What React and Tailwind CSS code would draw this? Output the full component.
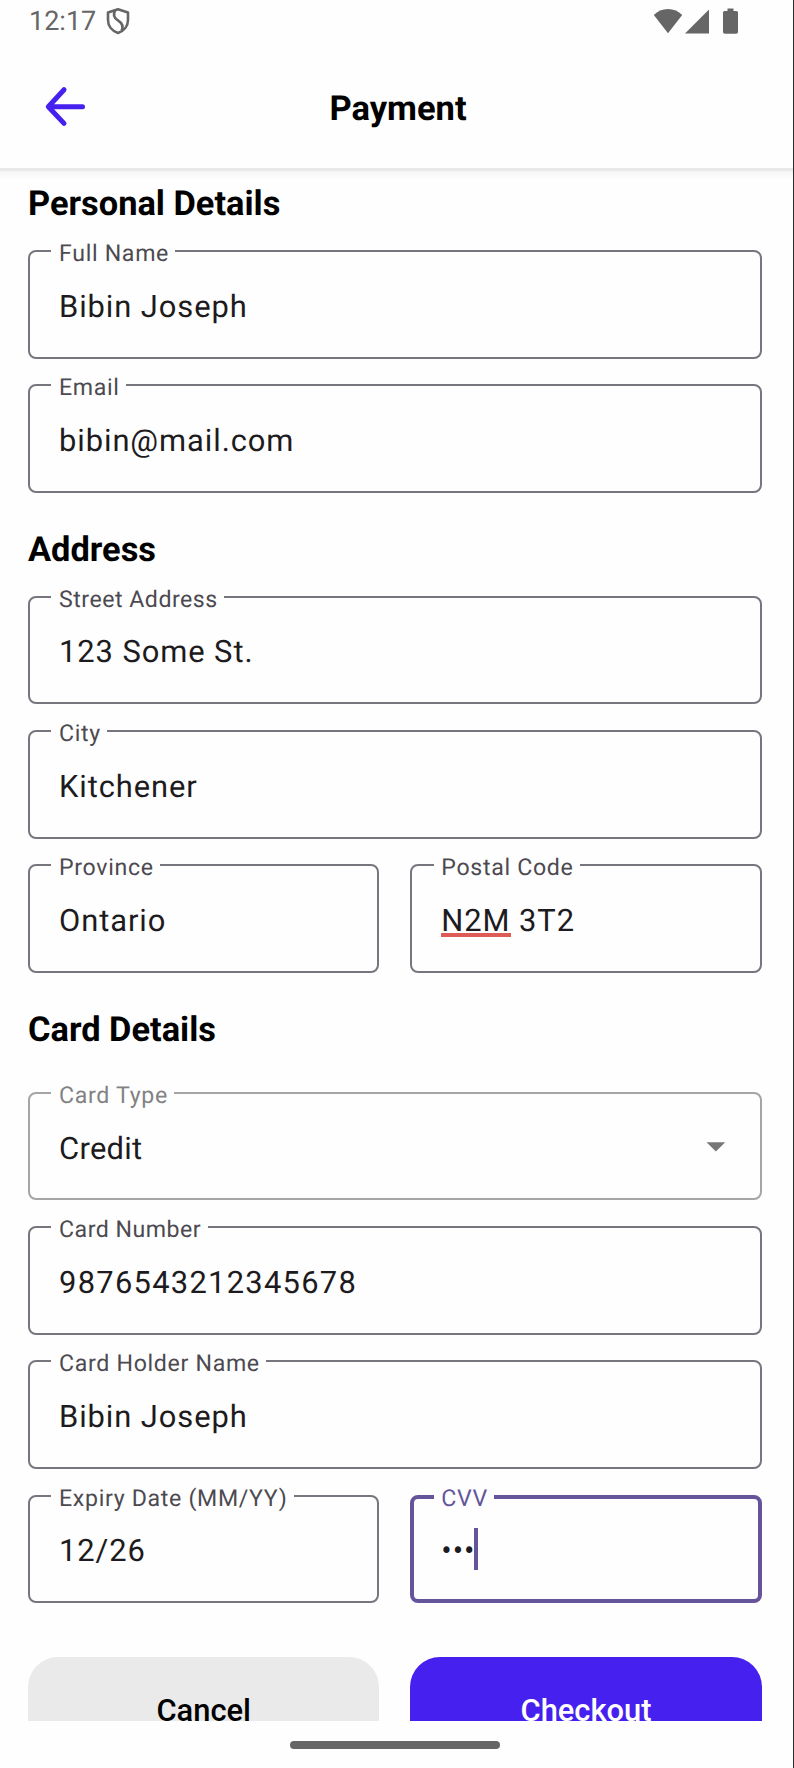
import React from "react";

function Heading({ children, className = "" }) {
  return (
    <h2 className={`h-10 pt-px text-[34.4px] leading-10 font-bold text-black whitespace-nowrap ${className}`}>
      {children}
    </h2>
  );
}

function Field({
  label,
  tone = "normal",
  trailing = null,
  labelTracking = "tracking-[0.68px]",
  valueTracking = "tracking-[0.92px]",
  children,
}) {
  const outline = {
    normal: "border-2 border-[#79757f]",
    muted: "border-2 border-[#a5a5a7]",
    focused: "border-4 border-[#65549a]",
  }[tone];
  const labelColor = {
    normal: "text-[#4c4a50]",
    muted: "text-[#828284]",
    focused: "text-[#65549a]",
  }[tone];
  const inset = tone === "focused" ? "pl-[27px]" : "pl-[29px]";
  return (
    <div className="relative h-[108.6px] min-w-0 flex-1">
      <div className={`flex h-full items-center justify-between rounded-[8px] ${outline}`}>
        <div
          className={`flex items-center pt-[5px] text-[30.9px] leading-[46px] whitespace-nowrap text-[#1d1b20] ${inset} ${valueTracking}`}
        >
          {children}
        </div>
        {trailing}
      </div>
      <span
        className={`absolute top-[-11px] left-[23.3px] bg-[#fefefe] pr-[6.4px] pl-[7.7px] text-[23.15px] leading-[30px] whitespace-nowrap ${labelColor} ${labelTracking}`}
      >
        {label}
      </span>
    </div>
  );
}

function StatusBar() {
  return (
    <div className="flex h-[42px] items-center pl-[29px] text-[#666666]">
      <span className="text-[27px] leading-[42px]">12:17</span>
      <svg width="24" height="28" viewBox="0 0 24 28" className="ml-[10px]" fill="none" stroke="currentColor" strokeWidth="2.6" strokeLinejoin="round">
        <path d="M12 2.2 L22 5.6 V13 C22 19 18 24 12 26 C6 24 2 19 2 13 V5.6 Z" />
        <path d="M9.2 3.4 C6.8 7.5 8 11 12.2 13.6 C16.6 16.3 17.6 19.3 15.6 23.6" />
      </svg>
      <div className="ml-auto flex items-center pr-[55px]">
        <svg width="30" height="26" viewBox="0 0 30 26" fill="currentColor">
          <path d="M15 25.2 L0.8 7 C4.6 3.2 9.4 1 15 1 C20.6 1 25.4 3.2 29.2 7 Z" />
        </svg>
        <svg width="24" height="26" viewBox="0 0 24 26" fill="currentColor" className="ml-[2px]">
          <path d="M24 1.5 V25.5 H0 Z" />
        </svg>
        <svg width="15" height="26" viewBox="0 0 15 26" fill="currentColor" className="ml-[14px]">
          <path d="M4.5 0.6 H10.5 V3 H13.4 Q15 3 15 4.6 V24 Q15 25.8 13.2 25.8 H1.8 Q0 25.8 0 24 V4.6 Q0 3 1.6 3 H4.5 Z" />
        </svg>
      </div>
    </div>
  );
}

function Header() {
  return (
    <div className="relative flex h-[126px] items-center justify-center">
      <svg
        width="42"
        height="42"
        viewBox="0 0 42 42"
        className="absolute top-[44px] left-[44px]"
        fill="none"
        stroke="#4620ee"
        strokeWidth="5"
        strokeLinecap="round"
        strokeLinejoin="round"
      >
        <path d="M38.5 20.7 H4.5 M20 3.7 L4.3 20.7 L20 37.4" />
      </svg>
      <h1 className="pt-[7px] pl-[3px] text-[34.5px] leading-10 font-bold text-black">Payment</h1>
    </div>
  );
}

export default function App() {
  return (
    <div className="flex h-[1768px] w-[794px] flex-col overflow-hidden border-r border-[#2b2b2b] bg-[#fefefe] font-['Roboto',sans-serif] [text-rendering:geometricPrecision]">
      <StatusBar />
      <Header />
      <div className="h-[3px] shrink-0 bg-[#e9e9e9]" />
      <div className="h-[9px] shrink-0 bg-linear-to-b from-[#f5f5f5] to-[#fefefe]" />

      <div className="h-[1541.3px] shrink-0 overflow-hidden pr-[31.3px] pl-[28px]">
        <Heading className="mt-[3px]">Personal Details</Heading>
        <div className="mt-[27px] flex flex-col gap-[25.7px]">
          <div className="flex">
            <Field label="Full Name">Bibin Joseph</Field>
          </div>
          <div className="flex">
            <Field label="Email">bibin@mail.com</Field>
          </div>
        </div>

        <Heading className="mt-[36px]">Address</Heading>
        <div className="mt-[26.8px] flex flex-col gap-[25.7px]">
          <div className="flex">
            <Field label="Street Address" labelTracking="tracking-[0.5px]">
              123 Some St.
            </Field>
          </div>
          <div className="flex">
            <Field label="City">Kitchener</Field>
          </div>
          <div className="flex gap-[31px]">
            <Field label="Province">Ontario</Field>
            <Field label="Postal Code">
              <span className="relative">
                N2M
                <span className="absolute top-[35px] -left-[0.5px] h-[4px] w-[70px] bg-[#dd5c56]" />
              </span>
              <span className="whitespace-pre"> 3T2</span>
            </Field>
          </div>
        </div>

        <Heading className="mt-[36.2px]">Card Details</Heading>
        <div className="mt-[42.8px] flex flex-col gap-[25.7px]">
          <div className="flex">
            <Field
              label="Card Type"
              tone="muted"
              valueTracking="tracking-[0.3px]"
              trailing={
                <svg width="20" height="10" viewBox="0 0 20 10" className="mt-[2px] mr-[34px]" fill="#77777a">
                  <path d="M0.5 0.3 H19.2 L9.9 9.6 Z" />
                </svg>
              }
            >
              Credit
            </Field>
          </div>
          <div className="flex">
            <Field label="Card Number" labelTracking="tracking-[0.5px]" valueTracking="tracking-[1.27px]">
              9876543212345678
            </Field>
          </div>
          <div className="flex">
            <Field label="Card Holder Name">Bibin Joseph</Field>
          </div>
          <div className="flex gap-[31px]">
            <Field label="Expiry Date (MM/YY)">12/26</Field>
            <Field label="CVV" tone="focused">
              <span>•••</span>
              <span className="-mt-[5px] -ml-[1.5px] h-[42px] w-[4px] bg-[#65549a]" />
            </Field>
          </div>
        </div>

        <div className="mt-[53.7px] flex gap-[31px] text-[30.9px] leading-[40px] font-medium">
          <button className="h-[108px] flex-1 rounded-[30px] bg-[#eaeaea] text-black">Cancel</button>
          <button className="h-[108px] flex-1 rounded-[30px] bg-[#4620ee] text-white">Checkout</button>
        </div>
      </div>

      <div className="mt-[19.7px] ml-[290px] h-2 w-[210px] shrink-0 rounded-full bg-[#666666]" />
    </div>
  );
}
